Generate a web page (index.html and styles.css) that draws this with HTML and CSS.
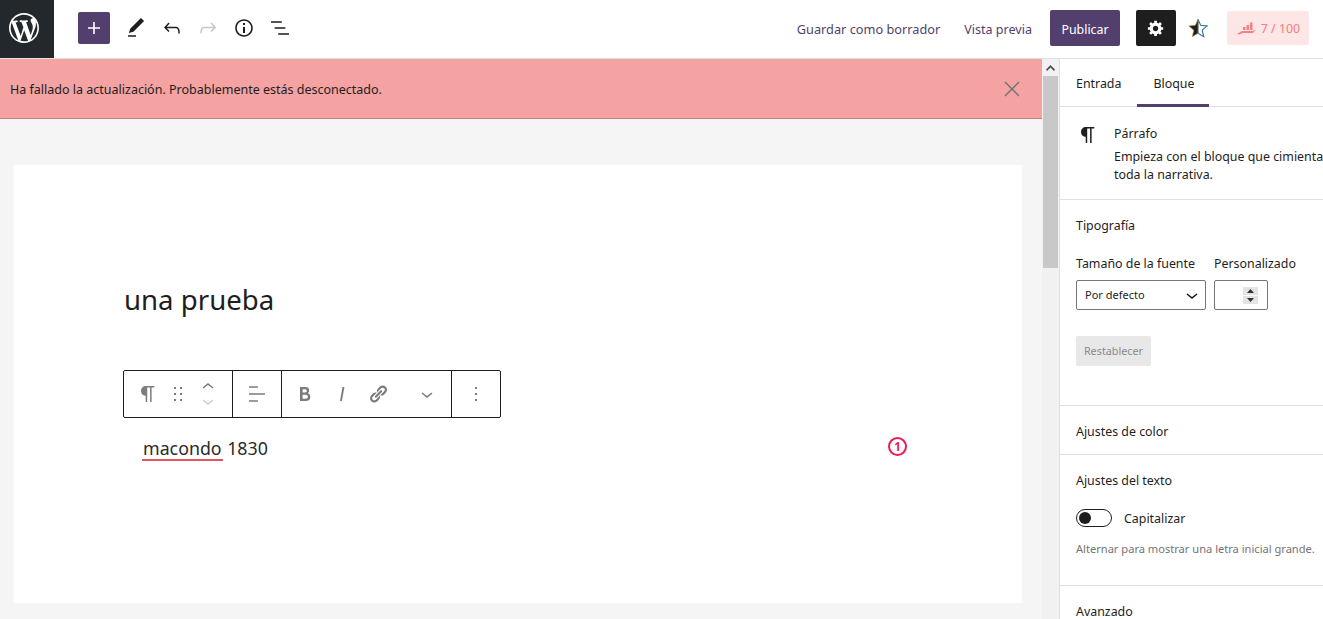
FILE: index.html
```html
<!DOCTYPE html>
<html lang="es">
<head>
  <meta charset="UTF-8" />
  <title>Editar entrada</title>
  <link rel="stylesheet" href="styles.css">
</head>
<body>

  <div class="top-bar">
    <div class="wp-logo">
      <svg viewBox="0 0 20 20" width="30" height="30"><path d="M20 10c0-5.51-4.49-10-10-10C4.48 0 0 4.49 0 10c0 5.52 4.48 10 10 10 5.51 0 10-4.48 10-10zM7.78 15.37L4.37 6.22c.55-.02 1.17-.08 1.17-.08.5-.06.44-1.13-.06-1.11 0 0-1.45.11-2.37.11-.18 0-.37 0-.58-.01C4.12 2.69 6.87 1.11 10 1.11c2.33 0 4.45.87 6.05 2.34-.68-.11-1.65.39-1.65 1.58 0 .74.45 1.36.9 2.1.35.61.55 1.36.55 2.46 0 1.49-1.4 5-1.4 5l-3.03-8.37c.54-.02.82-.17.82-.17.5-.05.44-1.25-.06-1.22 0 0-1.44.12-2.38.12-.87 0-2.33-.12-2.33-.12-.5-.03-.56 1.2-.06 1.22l.92.08 1.26 3.41zM17.41 10c.24-.64.74-1.87.43-4.25.7 1.29 1.05 2.71 1.05 4.25 0 3.29-1.73 6.24-4.4 7.78.97-2.59 1.94-5.2 2.92-7.78zM6.1 18.09C3.12 16.65 1.11 13.53 1.11 10c0-1.3.23-2.48.72-3.59C3.25 10.3 4.67 14.2 6.1 18.09zm4.03-6.63l2.58 6.98c-.86.29-1.76.45-2.71.45-.79 0-1.57-.11-2.29-.33.81-2.38 1.62-4.74 2.42-7.1z"/></svg>
    </div>
    <div class="tools-left">
      <button class="add-btn"><svg viewBox="0 0 24 24" width="24" height="24"><path d="M18 11.2h-5.2V6h-1.6v5.2H6v1.6h5.2V18h1.6v-5.2H18z"/></svg></button>
      <span class="tool"><svg viewBox="0 0 24 24" width="24" height="24"><path d="M20.1 5.1L16.9 2 6.2 12.7l-1.3 4.4 4.5-1.3L20.1 5.1zM4 20.8h8v-1.5H4v1.5z"/></svg></span>
      <span class="tool"><svg viewBox="0 0 24 24" width="24" height="24"><path d="M18.3 11.7c-.6-.6-1.4-.9-2.3-.9H6.7l2.9-3.3-1.1-1-4.5 5L8.5 16l1-1-2.7-2.7H16c.5 0 .9.2 1.3.5 1 1 1 3.4 1 4.5v.3h1.5v-.2c0-1.5 0-4.3-1.5-5.7z"/></svg></span>
      <span class="tool tool-off"><svg viewBox="0 0 24 24" width="24" height="24"><path d="M15.6 6.5l-1.1 1 2.9 3.3H8c-.9 0-1.7.3-2.3.9-1.4 1.5-1.4 4.2-1.4 5.6v.2h1.5v-.3c0-1.1 0-3.5 1-4.5.3-.3.7-.5 1.3-.5h9.2L14.5 15l1.1 1.1 4.6-4.6-4.6-5z"/></svg></span>
      <span class="tool"><svg viewBox="0 0 24 24" width="24" height="24"><path d="M12 3.2c-4.8 0-8.8 3.9-8.8 8.8 0 4.8 3.9 8.8 8.8 8.8 4.8 0 8.8-3.9 8.8-8.8 0-4.8-4-8.8-8.8-8.8zm0 16c-4 0-7.2-3.3-7.2-7.2C4.8 8 8 4.8 12 4.8s7.2 3.3 7.2 7.2c0 4-3.2 7.2-7.2 7.2zM11 17h2v-6h-2v6zm0-8h2V7h-2v2z"/></svg></span>
      <span class="tool"><svg viewBox="0 0 24 24" width="24" height="24"><path d="M13.8 5.2H3v1.5h10.8V5.2zm-3.6 12v1.5H21v-1.5H10.2zm7.2-6H6.6v1.5h10.8v-1.5z"/></svg></span>
    </div>
    <div class="tools-right">
      <a class="save-link">Guardar como borrador</a>
      <a class="preview-link">Vista previa</a>
      <button class="publish-btn">Publicar</button>
      <button class="settings-btn"><svg viewBox="0 0 20 20" width="18" height="18"><path d="M18 12h-2.18c-.17.7-.44 1.35-.81 1.93l1.54 1.54-2.1 2.1-1.54-1.54c-.58.36-1.23.63-1.91.79V19H8v-2.18c-.68-.16-1.33-.43-1.91-.79l-1.54 1.54-2.12-2.12 1.54-1.54c-.36-.58-.63-1.23-.79-1.91H1V9.03h2.17c.16-.7.44-1.35.8-1.94L2.43 5.55l2.1-2.1 1.54 1.54c.58-.37 1.24-.64 1.93-.81V2h3v2.18c.68.16 1.33.43 1.91.79l1.54-1.54 2.12 2.12-1.54 1.54c.36.59.64 1.24.8 1.94H18V12zm-8.5 1.5c1.66 0 3-1.34 3-3s-1.34-3-3-3-3 1.34-3 3 1.34 3 3 3z"/></svg></button>
      <span class="star">
        <svg viewBox="0 0 20 20" width="22" height="22">
          <path d="M10 2l2.4 5.5 5.9.6-4.5 3.9 1.4 5.9L10 14.8z" fill="#fff" stroke="#2b6ea8" stroke-width="1"/>
          <path d="M10 2L7.6 7.5l-5.9.6 4.5 3.9-1.4 5.9L10 14.8z" fill="#1e1e1e" stroke="#c98a3a" stroke-width=".6"/>
        </svg>
      </span>
      <span class="score-pill">
        <svg viewBox="0 0 20 14" width="20" height="14"><path fill="#f78080" d="M7 9V6h2.5v3zM10.5 9V4H13v5zM14 9V1.500h2.500V9zM1 13l5-3h11l3-2-3 4H7l-4 1.500z"/></svg>
        7 / 100
      </span>
    </div>
  </div>

  <div class="main">
    <div class="editor">
      <div class="notice">
        <span class="notice-text">Ha fallado la actualización. Probablemente estás desconectado.</span>
        <svg class="notice-close" viewBox="0 0 16 16" width="16" height="16"><path d="M1 1l14 14M15 1L1 15" stroke="#6f6f6f" stroke-width="1.3" fill="none"/></svg>
      </div>
      <div class="canvas">
        <h1 class="post-title">una prueba</h1>

        <div class="block-toolbar">
          <div class="tb-group tb-first">
            <svg class="tb-para" viewBox="0 0 24 24" width="24" height="24"><path d="M18.3 4H9.9v-.1l-.9.2c-2.3.4-4 2.4-4 4.8s1.7 4.4 4 4.8l.7.1V20h1.5V5.5h2.9V20h1.5V5.5h2.7V4z"/></svg>
            <svg class="tb-drag" viewBox="0 0 24 24" width="24" height="24"><path d="M8 7h2V5H8v2zm0 6h2v-2H8v2zm0 6h2v-2H8v2zm6-14v2h2V5h-2zm0 8h2v-2h-2v2zm0 6h2v-2h-2v2z"/></svg>
            <div class="tb-movers">
              <svg viewBox="0 3 24 16" width="24" height="16"><path d="M6.5 12.4L12 8l5.5 4.4-.9 1.2L12 10l-4.500 3.600-1-1.200z"/></svg>
              <svg class="tool-off" viewBox="0 5 24 16" width="24" height="16"><path d="M17.5 11.6L12 16l-5.5-4.400.9-1.200L12 14l4.500-3.600 1 1.200z"/></svg>
            </div>
          </div>
          <div class="tb-group tb-align">
            <svg viewBox="0 0 24 24" width="24" height="24"><path d="M4 19.8h8.9v-1.5H4v1.5zm8.9-15.6H4v1.5h8.9V4.2zm-8.9 7v1.5h16v-1.5H4z"/></svg>
          </div>
          <div class="tb-group tb-format">
            <svg viewBox="0 0 24 24" width="24" height="24"><path d="M14.7 11.3c1-.6 1.5-1.6 1.5-3 0-2.3-1.3-3.4-4-3.4H7v14h5.8c1.4 0 2.5-.3 3.3-1 .8-.7 1.2-1.7 1.2-2.9.1-1.9-.8-3.1-2.6-3.7zm-5.1-4h2.3c.6 0 1.1.1 1.4.4.3.3.5.7.5 1.2s-.2 1-.5 1.2c-.3.3-.8.4-1.4.4H9.6V7.3zm4.6 9c-.4.3-1 .4-1.7.4H9.6v-3.9h2.9c.7 0 1.3.2 1.7.5.4.3.6.8.6 1.5s-.2 1.2-.6 1.5z"/></svg>
            <svg viewBox="0 0 24 24" width="24" height="24"><path d="M12.5 5L10 19h1.9l2.5-14z"/></svg>
            <svg viewBox="-2 -2 24 24" width="24" height="24"><path d="M17.74 2.76c1.68 1.69 1.68 4.41 0 6.1l-1.53 1.52c-1.12 1.12-2.7 1.47-4.14 1.09l2.62-2.61.76-.77.76-.76c.84-.84.84-2.2 0-3.04-.84-.85-2.2-.85-3.04 0l-.77.76-3.38 3.38c-.37-1.44-.02-3.02 1.1-4.14l1.52-1.53c1.69-1.68 4.42-1.68 6.1 0zM8.59 13.43l5.34-5.34c.42-.42.42-1.1 0-1.52-.44-.43-1.13-.39-1.53 0l-5.33 5.34c-.42.42-.42 1.1 0 1.52.44.43 1.13.39 1.52 0zm-.76 2.29l4.14-4.15c.38 1.44.03 3.02-1.09 4.14l-1.52 1.53c-1.69 1.68-4.41 1.68-6.1 0-1.68-1.68-1.68-4.42 0-6.1l1.53-1.52c1.12-1.12 2.7-1.47 4.14-1.1l-4.14 4.15c-.85.84-.85 2.2 0 3.05.84.84 2.2.84 3.04 0z"/></svg>
            <svg class="tb-more" viewBox="0 0 24 24" width="24" height="24"><path d="M17.5 11.6L12 16l-5.5-4.4.9-1.2L12 14l4.5-3.6 1 1.2z"/></svg>
          </div>
          <div class="tb-group tb-options">
            <svg viewBox="0 0 24 24" width="24" height="24"><path d="M13 19h-2v-2h2v2zm0-6h-2v-2h2v2zm0-6h-2V5h2v2z"/></svg>
          </div>
        </div>

        <div class="para-row">
          <p class="post-para"><span class="misspelled">macondo</span> 1830</p>
          <span class="issue-badge">1</span>
        </div>
      </div>
    </div>

    <div class="scroll-track">
      <svg class="scroll-arrow" viewBox="0 0 9 6" width="9" height="6"><path d="M4.5 0L9 4.5 8 6 4.5 2.5 1 6 0 4.5z"/></svg>
      <div class="scroll-thumb"></div>
    </div>

    <div class="sidebar">
      <div class="tabs">
        <span class="tab">Entrada</span>
        <span class="tab tab-active">Bloque</span>
      </div>

      <div class="block-card">
        <svg viewBox="0 0 24 24" width="24" height="24"><path d="M18.3 4H9.9v-.1l-.9.2c-2.3.4-4 2.4-4 4.8s1.7 4.4 4 4.8l.7.1V20h1.5V5.5h2.9V20h1.5V5.5h2.7V4z"/></svg>
        <div class="block-card-text">
          <div class="block-card-title">Párrafo</div>
          <div class="block-card-desc">Empieza con el bloque que cimienta toda la narrativa.</div>
        </div>
      </div>

      <div class="panel panel-type">
        <div class="panel-title">Tipografía</div>
        <div class="font-row">
          <div class="font-size">
            <label>Tamaño de la fuente</label>
            <div class="select-box">
              <span>Por defecto</span>
              <svg viewBox="0 0 24 24" width="24" height="24"><path d="M17.5 11.6L12 16l-5.5-4.4.9-1.2L12 14l4.5-3.6 1 1.2z"/></svg>
            </div>
          </div>
          <div class="font-custom">
            <label>Personalizado</label>
            <div class="number-box">
              <div class="spinner">
                <span class="spin-half"><svg viewBox="0 0 7 4" width="7" height="4"><path d="M3.5 0L7 4H0z"/></svg></span>
                <span class="spin-half"><svg viewBox="0 0 7 4" width="7" height="4"><path d="M3.5 4L0 0h7z"/></svg></span>
              </div>
            </div>
          </div>
        </div>
        <button class="reset-btn">Restablecer</button>
      </div>

      <div class="panel panel-color">
        <div class="panel-title">Ajustes de color</div>
      </div>

      <div class="panel panel-text">
        <div class="panel-title">Ajustes del texto</div>
        <div class="toggle-row">
          <span class="toggle"><span class="toggle-knob"></span></span>
          <span>Capitalizar</span>
        </div>
        <div class="help">Alternar para mostrar una letra inicial grande.</div>
      </div>

      <div class="panel panel-adv">
        <div class="panel-title">Avanzado</div>
      </div>
    </div>
  </div>

</body>
</html>
```
FILE: styles.css
```css
html, body {
  margin: 0;
  padding: 0;
  height: 100%;
  overflow: hidden;
}
body {
  font-family: "Noto Sans", sans-serif;
  font-size: 12.4px;
  color: #1e1e1e;
  background: #fff;
}
button {
  font-family: inherit;
  border: none;
  padding: 0;
}

/* top bar */
.top-bar {
  display: flex;
  align-items: center;
  height: 58px;
  border-bottom: 1px solid #e0e0e0;
  box-sizing: content-box;
}
.wp-logo {
  width: 54px;
  height: 58px;
  box-sizing: border-box;
  padding: 0 0 2px 9px;
  background: #23282d;
  display: flex;
  align-items: center;
}
.wp-logo svg {
  fill: #fff;
}
.tools-left {
  display: flex;
  align-items: center;
  margin: 0 0 2px 24px;
}
.add-btn {
  width: 32px;
  height: 32px;
  background: #533f6e;
  border-radius: 2px;
  display: flex;
  align-items: center;
  justify-content: center;
  margin-right: 8px;
}
.add-btn svg {
  fill: #fff;
}
.tool {
  width: 36px;
  height: 36px;
  display: flex;
  align-items: center;
  justify-content: center;
}
.tool svg {
  fill: #1e1e1e;
}
.tool-off svg, svg.tool-off {
  fill: #c8c8c8;
}
.tools-right {
  margin: 0 0 2px auto;
  display: flex;
  align-items: center;
  padding-right: 14px;
}
.save-link, .preview-link {
  color: #533f6e;
  font-size: 12.75px;
  padding-top: 2px;
}
.preview-link {
  margin-left: 24px;
  font-size: 12.55px;
}
.publish-btn {
  margin-left: 18px;
  width: 70px;
  height: 36px;
  padding-top: 2px;
  background: #533f6e;
  color: #fff;
  font-size: 12.4px;
  border-radius: 2px;
}
.settings-btn {
  margin-left: 16px;
  width: 40px;
  height: 36px;
  background: #1e1e1e;
  border-radius: 2px;
  display: flex;
  align-items: center;
  justify-content: center;
}
.settings-btn svg {
  fill: #fff;
}
.star {
  width: 44px;
  display: flex;
  justify-content: center;
}
.score-pill {
  width: 82px;
  height: 34px;
  margin-left: 7px;
  box-sizing: border-box;
  background: #fde6e6;
  color: #f78080;
  border-radius: 3px;
  display: flex;
  align-items: center;
  justify-content: center;
  gap: 5px;
  font-size: 12.4px;
}

/* main area */
.main {
  display: flex;
  height: 560px;
  overflow: hidden;
}
.editor {
  flex: 0 0 1042px;
  background: #f5f5f5;
}
.notice {
  height: 60px;
  box-sizing: border-box;
  background: #f4a2a2;
  border-bottom: 1px solid #c77d7d;
  display: flex;
  align-items: center;
  justify-content: space-between;
  padding: 0 22px 0 10px;
}
.notice-text {
  font-size: 12.5px;
  padding-top: 2px;
}
.canvas {
  margin: 46px 20px 0 14px;
  height: 438px;
  background: #fff;
  padding: 109px 0 0 110px;
  box-sizing: border-box;
}
.post-title {
  margin: 0;
  font-size: 27.6px;
  font-weight: 400;
  line-height: 50px;
  height: 50px;
  color: #1e1e1e;
}
.block-toolbar {
  margin-top: 46px;
  margin-left: -1px;
  display: flex;
  width: 378px;
  height: 48px;
  box-sizing: border-box;
  border: 1px solid #1e1e1e;
  border-radius: 2px;
  background: #fff;
}
.tb-group {
  display: flex;
  align-items: center;
  border-right: 1px solid #1e1e1e;
}
.tb-group svg {
  fill: #7c7c7c;
  flex: none;
}
.tb-group .tool-off {
  fill: #d0d0d0;
}
.tb-first {
  width: 109px;
  padding-left: 12px;
  box-sizing: border-box;
}
.tb-drag {
  margin-left: 6px;
}
.tb-movers {
  margin-left: 6px;
  display: flex;
  flex-direction: column;
}
.tb-align {
  width: 49px;
  box-sizing: border-box;
  justify-content: center;
}
.tb-format {
  width: 170px;
  box-sizing: border-box;
  padding-left: 11px;
  gap: 13px;
}
.tb-format svg:nth-child(3) {
  margin-left: -1px;
}
.tb-format .tb-more {
  margin-left: 12px;
}
.tb-options {
  flex: 1;
  justify-content: center;
  border-right: none;
}
.para-row {
  display: flex;
  align-items: flex-start;
  justify-content: space-between;
  margin-top: 16px;
  padding: 0 115px 0 19px;
}
.post-para {
  margin: 0;
  font-size: 17.8px;
  line-height: 28px;
  color: #2a2a2a;
}
.misspelled {
  display: inline-block;
  height: 25px;
  margin-left: -1px;
  padding: 0 1px;
  border-bottom: 2px solid #e9545a;
  line-height: 28px;
}
.issue-badge {
  width: 19px;
  height: 19px;
  margin-top: 3px;
  box-sizing: border-box;
  border: 2px solid #f01a50;
  border-radius: 50%;
  color: #f01a50;
  font-size: 11.5px;
  font-weight: 700;
  line-height: 15px;
  text-align: center;
}

/* scrollbar */
.scroll-track {
  flex: 0 0 17px;
  background: #f1f1f1;
  display: flex;
  flex-direction: column;
  align-items: center;
}
.scroll-arrow {
  margin: 6px 0 5px;
  fill: #505050;
}
.scroll-thumb {
  width: 15px;
  height: 192px;
  background: #c8c8c8;
}

/* sidebar */
.sidebar {
  flex: 0 0 280px;
  border-left: 1px solid #e0e0e0;
}
.tabs {
  display: flex;
  height: 48px;
  box-sizing: border-box;
  border-bottom: 1px solid #e0e0e0;
}
.tab {
  padding: 0 16px;
  line-height: 49px;
}
.tab-active {
  padding-right: 15px;
  box-shadow: inset 0 -3px 0 #533f6e;
  height: 48px;
}
.block-card {
  display: flex;
  height: 93px;
  padding: 17px 16px 0 16px;
  box-sizing: border-box;
  border-bottom: 1px solid #e0e0e0;
}
.block-card svg {
  flex: none;
  fill: #1e1e1e;
  margin-right: 14px;
  margin-top: -1px;
}
.block-card-title {
  line-height: 20px;
}
.block-card-desc {
  line-height: 18px;
  margin-top: 4px;
  width: 235px;
}
.panel {
  padding: 0 16px;
  border-bottom: 1px solid #e0e0e0;
  box-sizing: border-box;
}
.panel-title {
  line-height: 20px;
}
.panel-type {
  height: 206px;
  padding-top: 16px;
}
.font-row {
  display: flex;
  gap: 8px;
  margin-top: 19px;
}
.font-row label {
  display: block;
  line-height: 18px;
  margin-bottom: 7px;
}
.select-box {
  width: 130px;
  height: 30px;
  box-sizing: border-box;
  border: 1px solid #757575;
  border-radius: 2px;
  display: flex;
  align-items: center;
  justify-content: space-between;
  padding: 0 8px;
  font-size: 11px;
}
.select-box span {
  padding-bottom: 2px;
}
.select-box svg {
  fill: #1e1e1e;
  margin-right: -7px;
}
.number-box {
  width: 54px;
  height: 30px;
  box-sizing: border-box;
  border: 1px solid #757575;
  border-radius: 2px;
  display: flex;
  align-items: center;
  justify-content: flex-end;
  padding-right: 9px;
}
.spinner {
  width: 15px;
  height: 17px;
  display: flex;
  flex-direction: column;
  justify-content: space-between;
}
.spin-half {
  height: 8px;
  background: #e4e4e4;
  display: flex;
  align-items: center;
  justify-content: center;
}
.spinner svg {
  fill: #333;
}
.reset-btn {
  display: block;
  margin-top: 26px;
  width: 75px;
  height: 30px;
  padding-bottom: 2px;
  background: #e8e8e8;
  color: #8a8a8a;
  font-size: 10.8px;
  border-radius: 2px;
}
.panel-color {
  height: 49px;
  padding-top: 16px;
}
.panel-text {
  height: 131px;
  padding-top: 16px;
}
.toggle-row {
  display: flex;
  align-items: center;
  gap: 12px;
  margin-top: 18px;
}
.toggle {
  display: flex;
  align-items: center;
  width: 36px;
  height: 18px;
  box-sizing: border-box;
  border: 1px solid #1e1e1e;
  border-radius: 9px;
  padding-left: 2px;
}
.toggle-knob {
  width: 12px;
  height: 12px;
  border-radius: 50%;
  background: #1e1e1e;
}
.help {
  margin-top: 14px;
  font-size: 11.1px;
  line-height: 16px;
  color: #757575;
}
.panel-adv {
  border-bottom: none;
  padding-top: 16px;
}
```
